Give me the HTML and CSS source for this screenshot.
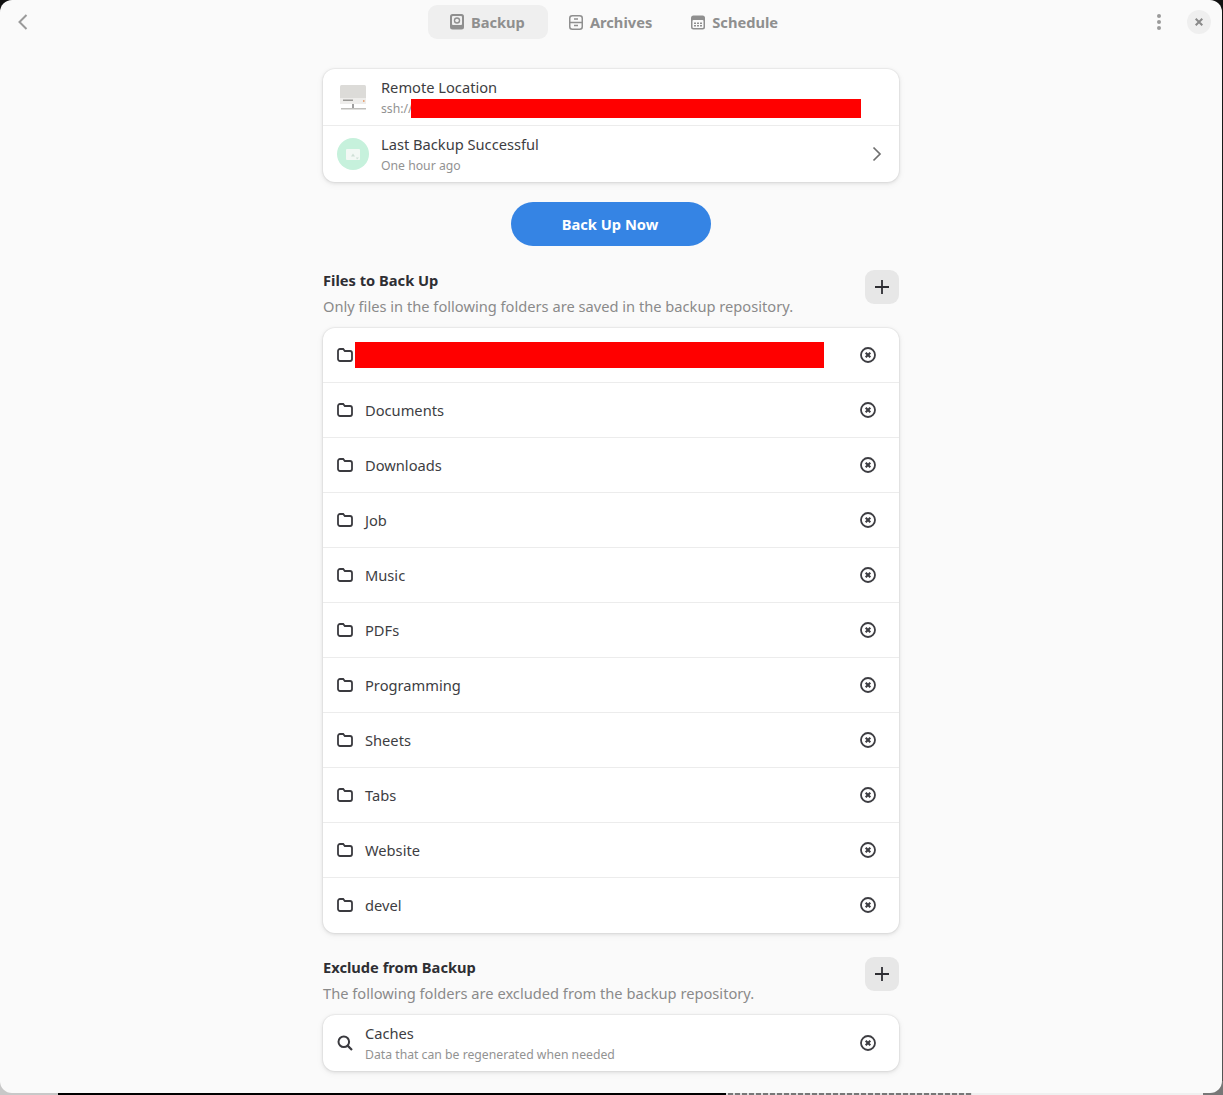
FILE: index.html
```html
<!DOCTYPE html>
<html>
<head>
    <title>Backup</title>
    <link rel="stylesheet" href="styles.css">
</head>
<body>
    <div class="desktop-strip">
        <div class="strip-grey"></div>
        <div class="strip-black"></div>
        <div class="strip-marks"></div>
        <div class="strip-light"></div>
        <div class="strip-end"></div>
    </div>

    <div class="window">
        <header class="headerbar">
            <button class="flat-btn back-btn" aria-label="Back">
                <svg width="16" height="16" viewBox="0 0 16 16"><path d="M11.5 1 4.5 8l7 7" fill="none" stroke="#9a9a9a" stroke-width="2"/></svg>
            </button>

            <nav class="tabs">
                <div class="tab active">
                    <svg width="14" height="16" viewBox="0 0 14 16"><rect width="14" height="15.5" rx="2.5" fill="#8f8f8f"/><rect x="2" y="2" width="10" height="9" rx="1" fill="#efefef"/><circle cx="7" cy="6.5" r="3.2" fill="#8f8f8f"/><circle cx="7" cy="6.5" r="1.8" fill="#efefef"/></svg>
                    <span>Backup</span>
                </div>
                <div class="tab">
                    <svg width="14" height="15" viewBox="0 0 14 15"><rect x="0.75" y="0.75" width="12.5" height="13.5" rx="2.5" fill="none" stroke="#8f8f8f" stroke-width="1.5"/><path d="M1 7.5h12M5 4h4M5 10.5h4" stroke="#8f8f8f" stroke-width="1.5"/></svg>
                    <span>Archives</span>
                </div>
                <div class="tab">
                    <svg width="14" height="15" viewBox="0 0 14 15"><rect y="0.5" width="14" height="14" rx="2.5" fill="#8f8f8f"/><rect x="1.5" y="5" width="11" height="8" rx="1" fill="#fafafa"/><path d="M3 7.5h2v1.5H3zM6 7.5h2v1.5H6zM9 7.5h2v1.5H9zM3 10h2v1.5H3zM6 10h2v1.5H6zM9 10h2v1.5H9z" fill="#8f8f8f"/></svg>
                    <span>Schedule</span>
                </div>
            </nav>

            <div class="header-end">
                <button class="flat-btn menu-btn" aria-label="Menu">
                    <svg width="4" height="16" viewBox="0 0 4 16"><circle cx="2" cy="2" r="2" fill="#9a9a9a"/><circle cx="2" cy="8" r="2" fill="#9a9a9a"/><circle cx="2" cy="14" r="2" fill="#9a9a9a"/></svg>
                </button>
                <button class="close-btn" aria-label="Close">
                    <svg width="8" height="8" viewBox="0 0 8 8"><path d="M.7.7l6.6 6.6M7.3.7.7 7.3" stroke="#8a8a8a" stroke-width="2"/></svg>
                </button>
            </div>
        </header>

        <main class="content">
            <section class="card">
                <div class="row status-row">
                    <svg class="row-pic" width="32" height="32" viewBox="0 0 32 32">
                        <rect x="3" y="4" width="26" height="19" rx="1.5" fill="#dcdbd8"/>
                        <rect x="3" y="17" width="26" height="6" fill="#eeedeb"/>
                        <path d="M6 18.5h10v1.5H6z" fill="#9a9996"/>
                        <rect x="26" y="19" width="1.5" height="2" fill="#e8a77c"/>
                        <rect x="15" y="23" width="2" height="4" fill="#a0a0a0"/>
                        <rect x="4" y="27" width="25" height="1.5" fill="#c0bfbc"/>
                    </svg>
                    <div class="row-text">
                        <div class="row-title">Remote Location</div>
                        <div class="row-sub">ssh://<span class="redact redact-url"></span></div>
                    </div>
                </div>
                <div class="row status-row">
                    <div class="status-circle">
                        <svg width="14" height="11" viewBox="0 0 14 11"><rect width="14" height="11" rx="1" fill="#f2f8f4"/><path d="M5 7.5l2-3 2 3z" fill="#cfe0d6"/><path d="M10 8.5h3l-2 2z" fill="#cfe0d6"/></svg>
                    </div>
                    <div class="row-text">
                        <div class="row-title">Last Backup Successful</div>
                        <div class="row-sub">One hour ago</div>
                    </div>
                    <svg class="chevron" width="16" height="16" viewBox="0 0 16 16"><path d="M4.5 1.5 11 8l-6.5 6.5" fill="none" stroke="#6f6f6f" stroke-width="1.7"/></svg>
                </div>
            </section>

            <button class="pill-btn">Back Up Now</button>

            <section class="group-head">
                <div>
                    <h2>Files to Back Up</h2>
                    <p>Only files in the following folders are saved in the backup repository.</p>
                </div>
                <button class="add-btn" aria-label="Add">
                    <svg width="14" height="14" viewBox="0 0 14 14"><path d="M7 0v14M0 7h14" stroke="#2e2e33" stroke-width="1.8"/></svg>
                </button>
            </section>

            <section class="card" id="folders"></section>

            <section class="group-head">
                <div>
                    <h2>Exclude from Backup</h2>
                    <p>The following folders are excluded from the backup repository.</p>
                </div>
                <button class="add-btn" aria-label="Add">
                    <svg width="14" height="14" viewBox="0 0 14 14"><path d="M7 0v14M0 7h14" stroke="#2e2e33" stroke-width="1.8"/></svg>
                </button>
            </section>

            <section class="card">
                <div class="row exclude-row">
                    <svg class="row-icon" width="16" height="16" viewBox="0 0 16 16"><circle cx="6.8" cy="6.8" r="5.3" fill="none" stroke="#3a3a3f" stroke-width="2"/><path d="M10.6 10.6 15 15" stroke="#3a3a3f" stroke-width="2.2"/></svg>
                    <div class="row-text">
                        <div class="row-title">Caches</div>
                        <div class="row-sub">Data that can be regenerated when needed</div>
                    </div>
                    <svg class="remove" width="16" height="16" viewBox="0 0 16 16"><circle cx="8" cy="8" r="7" fill="none" stroke="#3d3d42" stroke-width="1.8"/><path d="M5.7 5.7l4.6 4.6M10.3 5.7l-4.6 4.6" stroke="#3d3d42" stroke-width="2.1"/></svg>
                </div>
            </section>
        </main>
    </div>

    <script>
        const folders = ["", "Documents", "Downloads", "Job", "Music", "PDFs", "Programming", "Sheets", "Tabs", "Website", "devel"];
        const list = document.getElementById("folders");

        folders.forEach((name) => {
            const row = document.createElement("div");
            row.className = "row folder-row";
            const label = name ? `<span class="folder-name">${name}</span>` : `<span class="redact redact-folder"></span>`;
            row.innerHTML = `
                <svg class="row-icon" width="16" height="14" viewBox="0 0 16 14"><path d="M1 3a2 2 0 0 1 2-2h3.2l1.6 2H13a2 2 0 0 1 2 2v6a2 2 0 0 1-2 2H3a2 2 0 0 1-2-2z" fill="none" stroke="#3a3a3f" stroke-width="1.8"/></svg>
                ${label}
                <svg class="remove" width="16" height="16" viewBox="0 0 16 16"><circle cx="8" cy="8" r="7" fill="none" stroke="#3d3d42" stroke-width="1.8"/><path d="M5.7 5.7l4.6 4.6M10.3 5.7l-4.6 4.6" stroke="#3d3d42" stroke-width="2.1"/></svg>
            `;
            list.appendChild(row);
        });
    </script>
</body>
</html>
```

FILE: styles.css
```css
html, body {
    height: 100%;
}

body {
    position: relative;
    margin: 0;
    overflow: hidden;
    background: linear-gradient(#111, #555);
    font-family: "Noto Sans", sans-serif;
    color: #2e2e33;
}

button {
    padding: 0;
    border: none;
    background: none;
    font-family: inherit;
    cursor: pointer;
}

/* what shows of the desktop below the window */
.desktop-strip {
    position: absolute;
    left: 0;
    right: 0;
    bottom: 0;
    display: flex;
    height: 14px;
}

.strip-grey {
    width: 58px;
    background-color: #c8c8c8;
}

.strip-black {
    width: 668px;
    background-color: #000;
}

.strip-marks {
    width: 246px;
    background-color: #777;
    background-image: repeating-linear-gradient(90deg, #ddd 0 2px, #777 2px 7px);
}

.strip-light {
    flex: 1;
    background-color: #f0f0f0;
}

.strip-end {
    width: 20px;
    background-color: #777;
}

.window {
    position: relative;
    display: flex;
    flex-direction: column;
    width: 1222px;
    height: 1093px;
    background-color: #fafafa;
    border-radius: 12px;
    overflow: hidden;
}

.headerbar {
    display: flex;
    justify-content: center;
    position: relative;
    flex: none;
    height: 45px;
    padding-top: 5px;
    box-sizing: border-box;
}

.back-btn {
    position: absolute;
    left: 15px;
    top: 14px;
    display: flex;
}

.tabs {
    display: flex;
    gap: 5px;
    height: 34px;
    margin-left: 1px;
}

.tab {
    display: flex;
    align-items: center;
    justify-content: center;
    gap: 7px;
    height: 34px;
    padding: 0 23px 0 22px;
    border-radius: 9px;
    font-size: 14.67px;
    font-weight: 700;
    color: #8f8f8f;
}

.tab + .tab {
    padding: 0 17px 0 16px;
}

.tab:last-child {
    margin-left: 1px;
}

.tab.active {
    background-color: #efefef;
}

.header-end {
    position: absolute;
    right: 11px;
    top: 10px;
    display: flex;
    align-items: center;
    gap: 26px;
}

.menu-btn {
    display: flex;
}

.close-btn {
    display: flex;
    align-items: center;
    justify-content: center;
    width: 24px;
    height: 24px;
    border-radius: 50%;
    background-color: #efefef;
}

.content {
    display: flex;
    flex-direction: column;
    width: 576px;
    margin: 0 auto;
    padding-top: 24px;
}

.card {
    border-radius: 12px;
    background-color: #fff;
    box-shadow: 0 0 0 1px rgba(0, 0, 0, 0.03), 0 1px 3px 1px rgba(0, 0, 0, 0.07), 0 2px 6px 2px rgba(0, 0, 0, 0.03);
}

.row {
    display: flex;
    align-items: center;
    box-sizing: border-box;
    border-bottom: 1px solid #ececec;
}

.row:last-child {
    border-bottom: none;
}

.status-row {
    height: 57px;
    padding: 0 14px;
}

.status-row:last-child {
    height: 56px;
}

.row-pic {
    flex: none;
    margin-right: 12px;
}

.status-circle {
    display: flex;
    flex: none;
    align-items: center;
    justify-content: center;
    width: 32px;
    height: 32px;
    margin-right: 12px;
    border-radius: 50%;
    background-color: #c6f1dc;
}

.row-text {
    flex: 1;
    min-width: 0;
}

.row-title {
    font-size: 14.67px;
    line-height: 21px;
    color: #3d3d42;
}

.row-sub {
    display: flex;
    align-items: center;
    height: 19px;
    margin-top: 1px;
    font-size: 12.22px;
    color: #929292;
}

.redact {
    display: block;
    background-color: #f00;
}

.redact-url {
    flex: none;
    width: 450px;
    height: 19px;
    margin-left: -2px;
}

.redact-folder {
    width: 469px;
    height: 26px;
    margin-left: -10px;
}

.pill-btn {
    align-self: center;
    width: 200px;
    height: 44px;
    margin-top: 20px;
    padding-right: 2px;
    border-radius: 22px;
    background-color: #3584e4;
    color: #fff;
    font-size: 14.67px;
    font-weight: 700;
}

.group-head {
    display: flex;
    justify-content: space-between;
    margin-top: 24px;
    margin-bottom: 11px;
}

.group-head h2 {
    margin: 0;
    font-size: 14.67px;
    line-height: 21px;
    font-weight: 700;
    color: #2e2e33;
}

.group-head p {
    margin: 5px 0 0;
    font-size: 14.67px;
    line-height: 21px;
    color: #8a8a8a;
}

.add-btn {
    display: flex;
    flex: none;
    align-items: center;
    justify-content: center;
    width: 34px;
    height: 34px;
    border-radius: 9px;
    background-color: #e7e7e7;
}

.folder-row {
    height: 55px;
    padding: 0 23px 0 14px;
}

.folder-row:last-child {
    padding-bottom: 1px;
}

.row-icon {
    flex: none;
    margin-right: 12px;
}

.folder-name {
    flex: 1;
    font-size: 14.67px;
    color: #3d3d42;
}

.remove {
    flex: none;
    margin-left: auto;
}

.exclude-row {
    height: 56px;
    padding: 0 23px 0 14px;
}
```
